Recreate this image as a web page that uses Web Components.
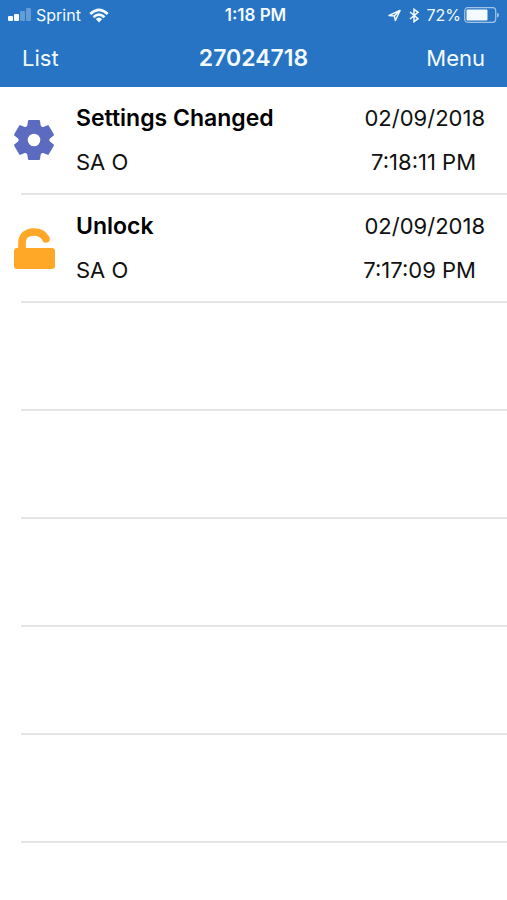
<!DOCTYPE html>
<html lang="en">
<head>
<meta charset="utf-8">
<meta name="viewport" content="width=device-width, initial-scale=1">
<title>27024718</title>
<style>
  body { margin: 0; min-height: 100vh; background: #fff; color: #111; font-family: Inter, "Liberation Sans", sans-serif; }
</style>
</head>
<body>
<lock-app></lock-app>
<script>
  class BaseElement extends HTMLElement {
    connectedCallback() {
      if (this.shadowRoot) return;
      this.attachShadow({ mode: "open" }).innerHTML = this.render();
    }
  }

  customElements.define("status-bar", class extends BaseElement {
    render() {
      return `
      <style>
        :host { display: grid; grid-template-columns: 1fr auto 1fr; align-items: center; height: 30px; padding: 0 8px; font-size: 16px; line-height: 30px; }
        div { display: flex; align-items: center; }
        .end { justify-content: flex-end; }
        .time { font-weight: 600; font-size: 17px; padding-left: 4px; }
        .signal { margin-right: 5px; }
        .wifi { margin-left: 8px; }
        .bt { margin: 0 7px 0 8px; }
        .battery { margin: 0 0 0 3px; }
        svg { flex: none; }
      </style>
      <div>
        <svg class="signal" width="23" height="14" viewBox="0 0 23 14" fill="currentColor" aria-label="Signal">
          <rect y="8" width="5" height="5" rx="1"/><rect x="6" y="6" width="5" height="7" rx="1"/>
          <rect x="12" y="3" width="5" height="10" rx="1" opacity=".3"/><rect x="18" y="0" width="5" height="13" rx="1" opacity=".3"/>
        </svg>
        <span>Sprint</span>
        <svg class="wifi" width="20" height="15" viewBox="0 0 20 15" fill="none" stroke="currentColor" stroke-width="2.7" aria-label="Wi-Fi">
          <path d="M1.3 6Q10-2.2 18.7 6M4.5 9.3Q10 4 15.5 9.3"/><path d="M6.8 11Q10 8 13.2 11L10 14.5Z" fill="currentColor" stroke="none"/>
        </svg>
      </div>
      <div class="time">1:18 PM</div>
      <div class="end">
        <svg width="13" height="13" viewBox="0 0 13 13" fill="none" stroke="currentColor" stroke-width="1.5" stroke-linejoin="round" aria-label="Location">
          <path d="M12 1.5L1 6.4L6.3 6.9L7.4 11.5Z"/><path d="M12 1.5L6.3 6.9"/>
        </svg>
        <svg class="bt" width="10" height="15" viewBox="0 0 10 15" fill="none" stroke="currentColor" stroke-width="1.5" aria-label="Bluetooth">
          <path d="M1 4L9 10.7L5 13.7V1.3L9 4.3L1 11"/>
        </svg>
        <span>72%</span>
        <svg class="battery" width="35" height="16" viewBox="0 0 35 16" aria-label="Battery">
          <rect x=".7" y=".7" width="31" height="14.6" rx="3" fill="none" stroke="currentColor" stroke-width="1.2" opacity=".6"/>
          <rect x="2.5" y="2.5" width="21" height="11" rx="1" fill="currentColor"/>
          <path d="M33 5.5Q35 6 35 8Q35 10 33 10.5Z" fill="currentColor" opacity=".6"/>
        </svg>
      </div>`;
    }
  });

  customElements.define("nav-bar", class extends BaseElement {
    render() {
      return `
      <style>
        :host { display: grid; grid-template-columns: 1fr auto 1fr; align-items: start; height: 57px; padding: 0 22px; box-sizing: border-box; }
        h1, button { font: inherit; font-size: 22px; line-height: 56px; margin: 0; }
        h1 { font-weight: 600; font-size: 23px; }
        button { padding: 0; border: 0; background: none; color: inherit; justify-self: start; cursor: pointer; }
        button:last-child { justify-self: end; }
      </style>
      <button type="button">List</button>
      <h1><slot></slot></h1>
      <button type="button">Menu</button>`;
    }
  });

  const icons = {
    settings: `
      <svg width="42" height="42" viewBox="-21 -21 42 42" fill="#5c6bc0" aria-hidden="true">
        <defs><path id="tooth" d="M-5-20H5Q5.8-20 6-19.3L6.7-14.5L8.5-12H-8.5L-6.7-14.5L-6-19.3Q-5.8-20-5-20Z"/></defs>
        <circle r="10.6" fill="none" stroke="#5c6bc0" stroke-width="8.6"/>
        <use href="#tooth"/><use href="#tooth" transform="rotate(60)"/><use href="#tooth" transform="rotate(120)"/>
        <use href="#tooth" transform="rotate(180)"/><use href="#tooth" transform="rotate(240)"/><use href="#tooth" transform="rotate(300)"/>
      </svg>`,
    unlock: `
      <svg width="42" height="42" viewBox="0 0 42 42" aria-hidden="true">
        <rect x="1" y="21" width="41" height="21" rx="3" fill="#ffa726"/>
        <path d="M9 23V16C9 9 14 5 20.5 5C26.5 5 31 7.5 33 12" fill="none" stroke="#ffa726" stroke-width="7.6"/>
        <circle cx="33" cy="12" r="3.8" fill="#ffa726"/>
      </svg>`
  };

  customElements.define("event-row", class extends BaseElement {
    render() {
      const icon = icons[this.getAttribute("icon")];
      return `
      <style>
        :host { display: block; padding-left: 21px; }
        .row { display: grid; grid-template-columns: 55px 1fr auto; box-sizing: border-box; min-height: 108px; padding: 9px 22px 9px 0; border-bottom: 2px solid #e5e5e6; font-size: 22px; line-height: 44px; }
        .icon { grid-row: 1 / 3; align-self: center; margin-left: -8px; display: flex; }
        .title { font-weight: 600; font-size: 23px; color: #000; }
        .date, .time { text-align: right; }
        .time { padding-right: 9px; }
      </style>
      <div class="row">${icon ? `
        <span class="icon">${icon}</span>
        <span class="title"><slot name="title"></slot></span><span class="date"><slot name="date"></slot></span>
        <span><slot name="user"></slot></span><span class="time"><slot name="time"></slot></span>` : ""}
      </div>`;
    }
  });

  customElements.define("lock-app", class extends BaseElement {
    render() {
      return `
      <style>
        :host { display: block; }
        header { background: #2674c3; color: #f4faff; }
      </style>
      <header><status-bar></status-bar><nav-bar>27024718</nav-bar></header>
      <main>
        <event-row icon="settings">
          <span slot="title">Settings Changed</span><span slot="date">02/09/2018</span>
          <span slot="user">SA O</span><span slot="time">7:18:11 PM</span>
        </event-row>
        <event-row icon="unlock">
          <span slot="title">Unlock</span><span slot="date">02/09/2018</span>
          <span slot="user">SA O</span><span slot="time">7:17:09 PM</span>
        </event-row>
        <event-row></event-row><event-row></event-row><event-row></event-row><event-row></event-row><event-row></event-row>
      </main>`;
    }
  });
</script>
</body>
</html>
